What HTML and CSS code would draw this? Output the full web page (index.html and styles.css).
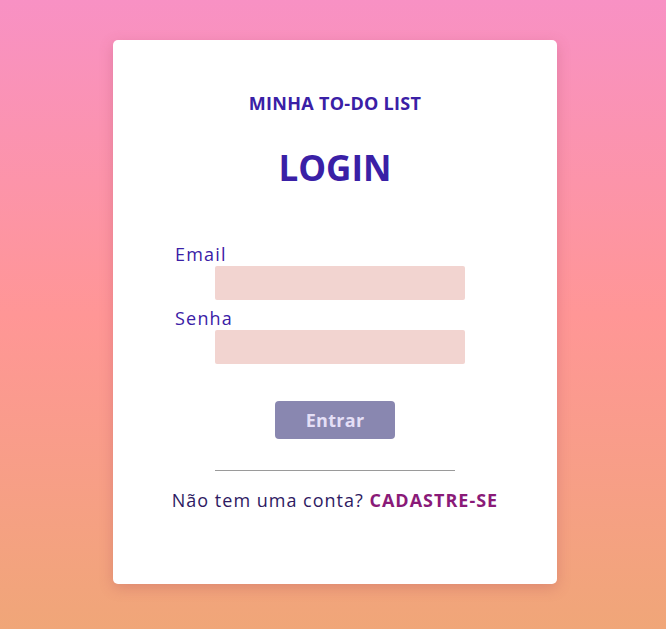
FILE: index.html
```html
<!DOCTYPE html>
<html lang="pt-BR">
<head>
<meta charset="utf-8">
<title>Login</title>
<link rel="stylesheet" href="styles.css">
</head>
<body>
<main class="card">
  <p class="brand">MINHA TO-DO LIST</p>
  <h1 class="title">LOGIN</h1>
  <form class="form">
    <label class="label" for="email">Email</label>
    <input class="input" id="email" type="email">
    <label class="label" for="senha">Senha</label>
    <input class="input" id="senha" type="password">
    <button class="btn" type="button">Entrar</button>
  </form>
  <hr class="divider">
  <p class="signup">Não tem uma conta? <a class="signup-link" href="#">CADASTRE-SE</a></p>
</main>
</body>
</html>
```
FILE: styles.css
```css
html, body {
  margin: 0;
  height: 100%;
}
body {
  font-family: "Open Sans", "Noto Sans", sans-serif;
  background: linear-gradient(180deg, #f891c4 0%, #ff9696 50%, #f0a678 100%);
  padding: 40px 0 0 4px;
  box-sizing: border-box;
}
.card {
  width: 444px;
  height: 544px;
  margin: 0 auto;
  background: #fff;
  border-radius: 5px;
  box-shadow: 0 4px 14px rgba(160, 60, 80, 0.25);
  box-sizing: border-box;
  padding-top: 51px;
  display: flex;
  flex-direction: column;
  align-items: center;
}
.brand {
  margin: 0;
  font-size: 18px;
  line-height: 24px;
  font-weight: 700;
  letter-spacing: 0.3px;
  color: #3a20a6;
}
.title {
  margin: 31px 0 0;
  font-size: 35px;
  line-height: 44px;
  font-weight: 700;
  color: #3a20a6;
}
.form {
  margin: 52px 30px 0 0;
  width: 290px;
  display: flex;
  flex-direction: column;
  align-items: flex-start;
}
.label {
  font-size: 18px;
  line-height: 24px;
  letter-spacing: 1.2px;
  color: #3a20a6;
}
.input {
  margin: 0 0 6px 40px;
  width: 250px;
  height: 34px;
  border: none;
  border-radius: 2px;
  background: #f2d4d0;
  box-sizing: border-box;
}
.btn {
  align-self: center;
  margin: 31px 0 0 30px;
  width: 120px;
  height: 38px;
  border: none;
  border-radius: 4px;
  background: #8987b0;
  color: #e4dff6;
  font-family: inherit;
  font-size: 18px;
  font-weight: 700;
  letter-spacing: 0.3px;
}
.divider {
  margin: 31px 0 0;
  width: 240px;
  border: none;
  border-top: 1px solid #9a9a9a;
}
.signup {
  margin: 17px 0 0;
  font-size: 18px;
  line-height: 24px;
  letter-spacing: 1px;
  color: #2e1a62;
}
.signup-link {
  color: #8a1a78;
  font-weight: 700;
  text-decoration: none;
}
```
